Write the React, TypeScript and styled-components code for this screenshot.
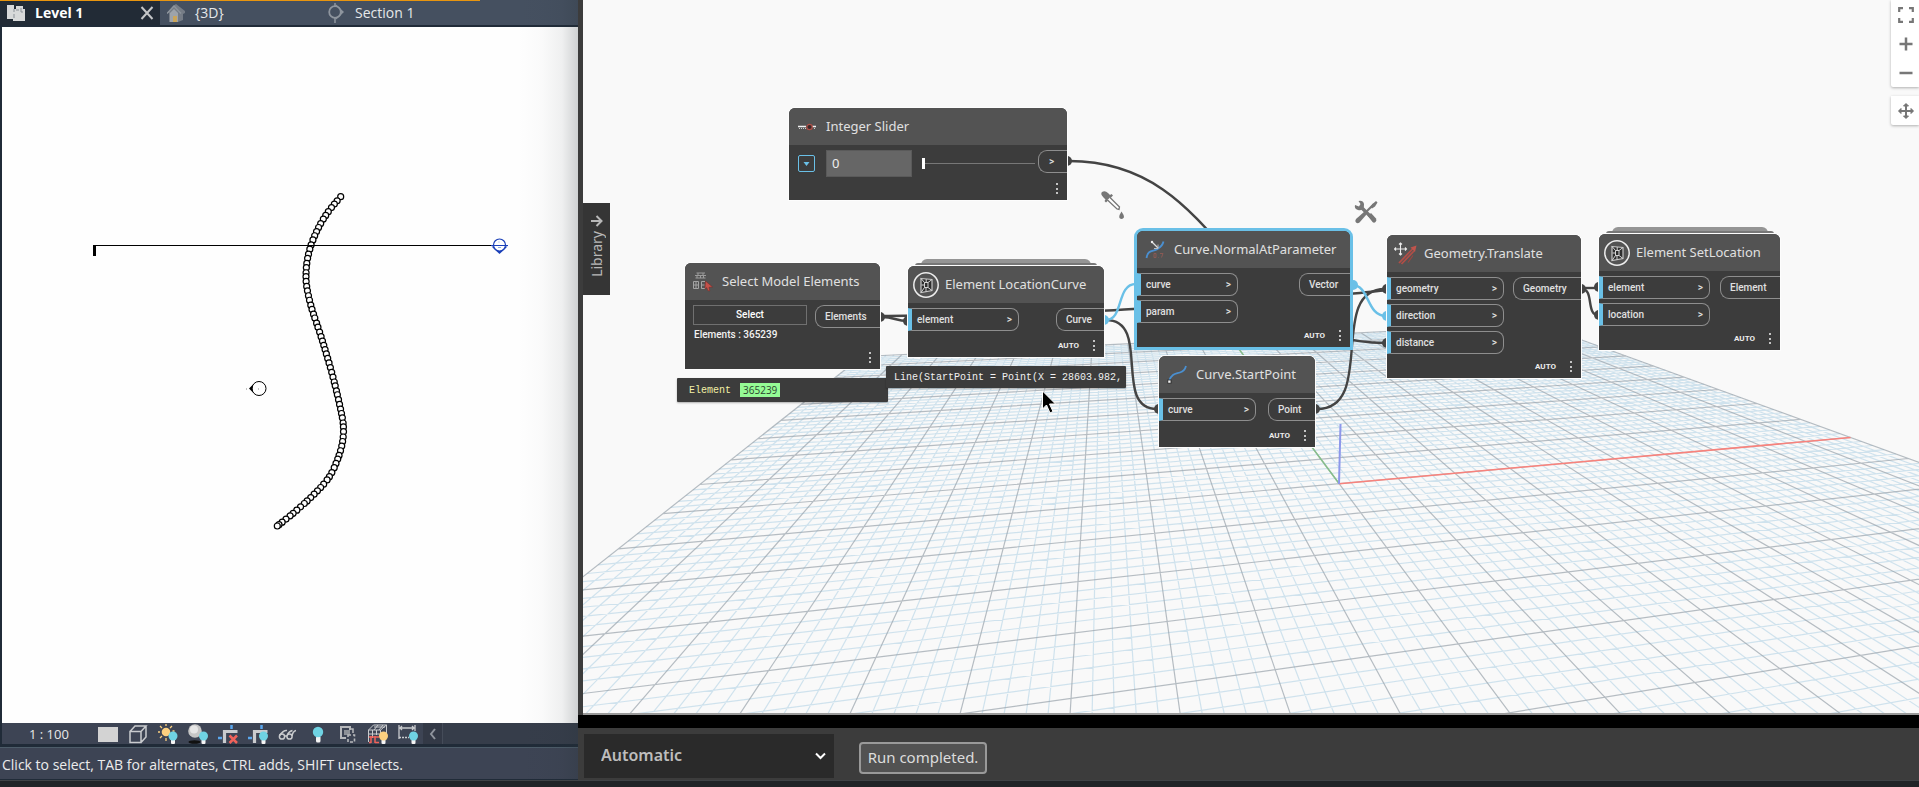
import React from 'react';
import styled, { createGlobalStyle } from 'styled-components';

const colors = {
  node: '#3c3c3c',
  header: '#535353',
  text: '#e0e0e0',
  outline: '#8e8e8e',
  accent: '#6ac0e7',
  wire: '#444444',
  cyan: '#6fd3e3',
  amber: '#fcd07f',
  icon: '#c9cbce',
  red: '#f0625a',
};

const GlobalStyle = createGlobalStyle`
  *, *::before, *::after { box-sizing: border-box; }
  body { margin: 0; font-family: "Open Sans", "Noto Sans", sans-serif; background: #202427; }
  button, input, select { font: inherit; color: inherit; margin: 0; }
  svg { display: block; flex: none; }
`;

/* ---------- window shell ---------- */

const Shell = styled.div`
  display: flex;
  flex-direction: column;
  height: 100vh;
  overflow: hidden;
`;

const Windows = styled.div`
  display: flex;
  flex: 1;
  min-height: 0;
`;

const Taskbar = styled.footer`
  height: 7px;
  background: #202427;
  border-top: 1px solid #3f4346;
`;

/* ---------- drawing window on the left ---------- */

const DrawingWindow = styled.section`
  position: relative;
  display: flex;
  flex-direction: column;
  flex: 578 1 0;
  min-width: 0;
  background: #202b38;

  &::after {
    content: '';
    position: absolute;
    inset: 0 0 0 auto;
    width: 60px;
    pointer-events: none;
    background: linear-gradient(90deg, rgba(40, 50, 55, 0) 0, rgba(40, 50, 55, 0.02) 24px, rgba(40, 50, 55, 0.07) 44px, rgba(40, 50, 55, 0.22) 60px);
  }
`;

const TabBar = styled.nav`
  position: relative;
  display: flex;
  height: 27px;
  background: #455060;
  border-bottom: 2px solid #202b38;

  &::before {
    content: '';
    position: absolute;
    left: 0;
    top: 0;
    width: 83%;
    height: 1px;
    background: #e8950f;
  }
`;

const Tab = styled.div<{ $active?: boolean }>`
  display: flex;
  align-items: center;
  width: 160px;
  padding: 0 6px 0 7px;
  background: ${p => (p.$active ? '#222b36' : 'transparent')};
`;

const TabLink = styled.button<{ $active?: boolean }>`
  display: flex;
  flex: 1;
  align-items: center;
  gap: 10px;
  padding: 0;
  border: 0;
  background: none;
  color: ${p => (p.$active ? '#ffffff' : '#e6e8ea')};
  font-size: 14px;
  line-height: 24px;
  font-weight: ${p => (p.$active ? 700 : 400)};
`;

const IconButton = styled.button`
  display: grid;
  place-items: center;
  padding: 0;
  border: 0;
  background: none;
`;

const Drawing = styled.div`
  flex: 1;
  min-height: 0;
  margin-left: 2px;
  background: #fefefe;
  overflow: hidden;
`;

const ViewBar = styled.div`
  display: flex;
  align-items: center;
  height: 21px;
  margin-left: 2px;
  background: #363d4a;
`;

const ViewTools = styled.div`
  display: flex;
  align-items: center;
  gap: 10px;
  height: 21px;
  padding: 0 5px 0 27px;
  background: #3d4454;
`;

const ScaleButton = styled.button`
  width: 59px;
  padding: 0;
  border: 0;
  background: none;
  color: #e8e8e8;
  font-size: 13px;
  line-height: 20px;
  text-align: left;
`;

const ToolButton = styled(IconButton)`
  width: 20px;
  height: 20px;
`;

const CollapseButton = styled(IconButton)`
  width: 20px;
  height: 21px;
  background: #333946;
  border-right: 1px solid #454c59;
`;

const StatusLine = styled.p`
  margin: 3px 0 1px;
  padding: 3px 0 0 2px;
  border-top: 1px solid #4d5c69;
  background: #3d4454;
  color: #ececec;
  font-size: 14px;
  line-height: 28px;
  white-space: nowrap;
`;

/* ---------- graph window on the right ---------- */

const GraphWindow = styled.section`
  display: flex;
  flex-direction: column;
  flex: 1341 1 0;
  min-width: 0;
  background: #3c3c3c;
`;

const Canvas = styled.div`
  position: relative;
  flex: 1;
  min-height: 0;
  margin-left: 5px;
  background: #f9f9f9;
  border-bottom: 2px solid #999999;
  overflow: hidden;
`;

const Backdrop = styled.svg`
  position: absolute;
  inset: 0;
  width: 100%;
  height: 100%;
`;

const LibraryTab = styled.button`
  position: absolute;
  left: 0;
  top: 203px;
  display: flex;
  flex-direction: column;
  align-items: center;
  gap: 4px;
  width: 27px;
  height: 92px;
  padding: 12px 0 0;
  border: 0;
  background: #353535;
  color: #b8b8b8;
  font: 400 14px "Noto Sans", sans-serif;
`;

const SideLabel = styled.span`
  writing-mode: vertical-rl;
  transform: rotate(180deg);
  line-height: 20px;
`;

const Controls = styled.div`
  position: absolute;
  right: 0;
  top: 0;
  display: flex;
  flex-direction: column;
  gap: 9px;
`;

const ControlGroup = styled.div`
  display: flex;
  flex-direction: column;
  width: 28px;
  padding: 0 0 0 1px;
  background: #ffffff;
  border-radius: 0 0 0 2px;
  box-shadow: 0 1px 3px rgba(0, 0, 0, 0.3);
`;

const ControlButton = styled(IconButton)`
  height: 29px;
  color: #777777;
`;

const Divider = styled.div`
  height: 13px;
  background: #000000;
`;

const RunBar = styled.div`
  display: flex;
  align-items: center;
  gap: 25px;
  height: 52px;
  padding: 4px 0 0 6px;
  font-family: "Noto Sans", sans-serif;
`;

const RunModeWrap = styled.label`
  position: relative;
  display: flex;
  align-items: center;
  svg { position: absolute; right: 8px; pointer-events: none; }
`;

const RunMode = styled.select`
  appearance: none;
  width: 250px;
  height: 44px;
  padding: 0 30px 3px 17px;
  border: 0;
  border-radius: 0;
  background: #2a2a2a;
  color: #bdbdbd;
  font-size: 16px;
  font-weight: 600;
`;

const RunState = styled.output`
  width: 128px;
  margin-top: 4px;
  padding-bottom: 2px;
  border: 2px solid #999999;
  border-radius: 4px;
  background: #525252;
  color: #dcdcdc;
  font-size: 15px;
  line-height: 26px;
  text-align: center;
`;

/* ---------- nodes ---------- */

const Node = styled.article<{ $x: number; $y: number; $w: number; $selected?: boolean }>`
  position: absolute;
  left: ${p => p.$x}px;
  top: ${p => p.$y}px;
  width: ${p => p.$w}px;
  border-radius: 6px 6px 0 0;
  background: ${colors.node};
  color: ${colors.text};
  font: 500 10px/20px Roboto, sans-serif;
  box-shadow: 0 0 0 ${p => (p.$selected ? `3px ${colors.accent}` : '1px #fdfdfd')};
`;

const NodeHeader = styled.header`
  display: grid;
  grid-template-columns: 26px 1fr;
  align-items: center;
  gap: 6px;
  height: 37px;
  padding-left: 5px;
  border-radius: 6px 6px 0 0;
  background: ${colors.header};
  svg { justify-self: center; }
`;

const NodeTitle = styled.h2`
  margin: 0;
  padding-bottom: 2px;
  font: 400 13px/20px "Noto Sans", sans-serif;
  white-space: nowrap;
`;

const Ports = styled.div`
  display: flex;
  justify-content: space-between;
  align-items: flex-start;
  min-height: 30px;
  padding-top: 5px;
`;

const PortColumn = styled.div`
  display: flex;
  flex-direction: column;
  gap: 4px;
`;

const InPort = styled.button<{ $w: number }>`
  display: flex;
  justify-content: space-between;
  width: ${p => p.$w}px;
  padding: 0 6px 0 5px;
  border: 1px solid ${colors.outline};
  border-left: 4px solid ${colors.accent};
  border-radius: 0 8px 8px 0;
  background: ${colors.node};
  line-height: 21px;
`;

const OutPort = styled.button<{ $w: number }>`
  width: ${p => p.$w}px;
  padding: 0 0 0 9px;
  border: 1px solid ${colors.outline};
  border-right: 0;
  border-radius: 9px 0 0 9px;
  background: ${colors.node};
  line-height: 21px;
  text-align: left;
`;

const NodeFooter = styled.footer`
  display: flex;
  justify-content: flex-end;
  align-items: center;
  gap: 14px;
  height: 24px;
  padding: 2px 8px 0 0;
  font-size: 8px;
  font-weight: 700;
  color: #ececec;
`;

const CompactFooter = styled(NodeFooter)`
  height: 18px;
  padding: 0 8px 4px 0;
`;

const SelectButton = styled.button`
  width: 114px;
  padding: 0 0 1px;
  border: 1px solid #707070;
  background: transparent;
  color: #ffffff;
  line-height: 17px;
`;

const SelectBlock = styled.div`
  padding-left: 8px;
`;

const SelectedIds = styled.p`
  margin: 0;
  padding-left: 1px;
  color: #f2f2f2;
`;

const SliderRow = styled.div`
  display: flex;
  align-items: center;
  height: 37px;
  padding: 0 0 0 9px;
`;

const ExpandButton = styled(IconButton)`
  width: 17px;
  height: 17px;
  margin-right: 11px;
  border: 1px solid ${colors.accent};
  border-radius: 2px;
`;

const ValueInput = styled.input`
  width: 86px;
  height: 27px;
  margin-right: 10px;
  padding: 0 5px 1px;
  border: 1px solid #5a5a5a;
  background: #666666;
  color: #eeeeee;
  font: 400 13px "Noto Sans", sans-serif;
`;

const Range = styled.input`
  appearance: none;
  flex: 1;
  min-width: 0;
  height: 11px;
  margin-right: 3px;
  background: linear-gradient(#777777, #777777) center / 100% 1px no-repeat;

  &::-webkit-slider-thumb {
    appearance: none;
    width: 3px;
    height: 11px;
    background: #ffffff;
  }
`;

const SliderOut = styled(OutPort)`
  height: 23px;
  padding-left: 10px;
  align-self: flex-start;
  margin-top: 5px;
`;

const StackLip = styled.div<{ $x: number; $y: number; $w: number }>`
  position: absolute;
  left: ${p => p.$x}px;
  top: ${p => p.$y}px;
  width: ${p => p.$w}px;
  height: 7px;
  padding: 4px 0 0;
  border-radius: 6px 6px 0 0;
  background: #959595;

  &::after {
    content: '';
    display: block;
    height: 3px;
    margin: 0 -6px;
    border-radius: 4px 4px 0 0;
    background: #777777;
  }
`;

/* ---------- value previews ---------- */

const Preview = styled.div<{ $x: number; $y: number; $w: number; $h: number }>`
  position: absolute;
  left: ${p => p.$x}px;
  top: ${p => p.$y}px;
  display: flex;
  align-items: center;
  gap: 9px;
  width: ${p => p.$w}px;
  height: ${p => p.$h}px;
  padding: 0 8px;
  border-radius: 1px;
  background: ${colors.node};
  box-shadow: 0 1px 2px rgba(0, 0, 0, 0.3);
  color: #f0f0f0;
  font: 400 10px "Liberation Mono", monospace;
  white-space: nowrap;
`;

const PreviewType = styled.span`
  padding-left: 4px;
  color: #f2f0a6;
`;

const IdChip = styled.a`
  padding: 0 3px;
  background: #95fb95;
  color: #2c4430;
  font: 400 10px/14px "Open Sans", sans-serif;
  text-decoration: none;
`;

const Floating = styled.svg<{ $x: number; $y: number }>`
  position: absolute;
  left: ${p => p.$x}px;
  top: ${p => p.$y}px;
`;

/* ---------- perspective ground grid ---------- */

const ORIGIN = [1339.2 - 583, 483.7];
const VANISH_X = [4858 - 583, 166];
const VANISH_Y = [1102.8 - 583, 166];
const A = 0.017;
const B = 0.0838;

function project(k: number, m: number): [number, number] {
  const w = 1 + A * k + B * m;
  return [
    (ORIGIN[0] + A * k * VANISH_X[0] + B * m * VANISH_Y[0]) / w,
    (ORIGIN[1] + A * k * VANISH_X[1] + B * m * VANISH_Y[1]) / w,
  ];
}

function segment(a: [number, number], b: [number, number]) {
  return `M${a[0].toFixed(1)} ${a[1].toFixed(1)}L${b[0].toFixed(1)} ${b[1].toFixed(1)}`;
}

function gridPaths() {
  const near = 0.2;
  let minor = '';
  let major = '';
  for (let i = -50; i <= 50; i++) {
    const v = i / 5;
    const mMin = Math.max(-10, (near - 1 - A * v) / B);
    const kMin = Math.max(-10, (near - 1 - B * v) / A);
    let d = segment(project(v, mMin), project(v, 10));
    if (kMin < 10) d += segment(project(kMin, v), project(10, v));
    if (i % 5 === 0) major += d;
    else minor += d;
  }
  return { minor, major };
}

const grid = gridPaths();
const axisX = segment(project(0, 0), project(10, 0));
const axisY = segment(project(0, 0), project(0, 10));

/* ---------- chain of circles along the curve ---------- */

const SPINE: [number, number][] = [
  [340.7, 196.7], [328.3, 211.7], [319, 226.7], [311.7, 243.3], [307.3, 260], [306, 276.7], [307.3, 290],
  [311.7, 308.3], [320, 333.3], [326.7, 355], [333.3, 378.3], [339.3, 403.3], [343.3, 425], [342.3, 443.3],
  [336.7, 461.7], [328.3, 478.3], [313.3, 495], [295, 511.7], [277.3, 526],
];

function chainLinks(step: number) {
  const dense: [number, number][] = [];
  for (let i = 0; i < SPINE.length - 1; i++) {
    const p0 = SPINE[Math.max(0, i - 1)];
    const p1 = SPINE[i];
    const p2 = SPINE[i + 1];
    const p3 = SPINE[Math.min(SPINE.length - 1, i + 2)];
    for (let s = 0; s < 20; s++) {
      const t = s / 20;
      const f = (j: 0 | 1) =>
        0.5 * (2 * p1[j] + (p2[j] - p0[j]) * t + (2 * p0[j] - 5 * p1[j] + 4 * p2[j] - p3[j]) * t * t +
          (3 * p1[j] - p0[j] - 3 * p2[j] + p3[j]) * t * t * t);
      dense.push([f(0), f(1)]);
    }
  }
  dense.push(SPINE[SPINE.length - 1]);
  const links = [dense[0]];
  let run = 0;
  for (let i = 1; i < dense.length; i++) {
    run += Math.hypot(dense[i][0] - dense[i - 1][0], dense[i][1] - dense[i - 1][1]);
    if (run >= step) {
      links.push(dense[i]);
      run -= step;
    }
  }
  links.push(dense[dense.length - 1]);
  return links;
}

const links = chainLinks(4.7);

/* ---------- icons ---------- */

const Dots = () => (
  <svg width="3" height="12" fill="#c4c4c4" aria-hidden="true">
    <rect y="0" x="0" width="2" height="2" /><rect y="5" width="2" height="2" /><rect y="9" width="2" height="2" />
  </svg>
);

const RevitBadge = () => (
  <svg width="26" height="26" viewBox="0 0 26 26" fill="none">
    <circle cx="13" cy="13" r="12.2" stroke="#ececec" strokeWidth="1.5" />
    <path d="M8 6.500l11 1v11l-11 2z" fill="#2e2e2e" stroke="#c6c6c6" strokeWidth="1.200" />
    <path d="M8 6.500l3.500 4h3.500l4-3M11.500 10.500v5h3.500v-5M8 20.500l3.500-5M15 15.500l4 3M13.200 7v3.500M13 15.500v4M8.500 13h3" stroke="#d4d4d4" strokeWidth="1" />
  </svg>
);

const SliderIcon = () => (
  <svg width="18" height="10" viewBox="0 0 18 10" fill="none">
    <path d="M0 4.500h8M14 4.500h4" stroke="#f0f0f0" strokeWidth="1.500" />
    <path d="M1 6.500h1M3 6.500h1M5 6.500h1M7 6.500h1M16 6.500h1" stroke="#c8c8c8" />
    <circle cx="11.500" cy="5" r="2.700" stroke="#b05048" strokeWidth="1.200" fill="#3a2a2a" />
  </svg>
);

const SelectElementsIcon = () => (
  <svg width="20" height="20" viewBox="0 0 20 20" fill="none">
    <path d="M3.500 1h8.500M2 3.500h11M2.500 6h10M5 1v2M10 1v2M7.500 3v3M4 4v2M10.500 4v2" stroke="#9c9c9c" />
    <path d="M.5 9.500h5v7h-5zM.5 13h5M3 9.500v7M12 9.500H8.500v7H12M8.500 13h3" stroke="#a4a4a4" />
    <path d="M12.500 9l7 6-3.500.300.800 3.700-2-.400-1-3-1.800 1.400z" fill="#c4514a" stroke="#7a2a26" strokeWidth=".5" />
  </svg>
);

const NormalIcon = () => (
  <svg width="20" height="20" viewBox="0 0 20 20" fill="none">
    <path d="M1.500 18C3 9 8.500 12 12.500 9c3-2 5-3 6-7.500" stroke="#4a8fd0" strokeWidth="1.800" />
    <path d="M7 2l6 6" stroke="#dddddd" strokeWidth="1.200" /><circle cx="7" cy="2" r="1.200" fill="#eee" />
    <path d="M13 4.500v4H9" stroke="#bbb" />
    <path d="M9 13.500h2v4H9zM13 17.500h.500M15 13.500h3l-1.500 4" stroke="#8a5a54" />
  </svg>
);

const StartPointIcon = () => (
  <svg width="20" height="20" viewBox="0 0 20 20" fill="none">
    <path d="M2 16C5 8 9 9 13 7.500c3-1 5-2.500 6-6.500" stroke="#4a8fd0" strokeWidth="1.800" />
    <rect x=".8" y="15" width="3.200" height="3.200" fill="#f4f4f4" stroke="#222" strokeWidth=".8" />
  </svg>
);

const TranslateIcon = () => (
  <svg width="23" height="23" viewBox="0 0 23 23" fill="none">
    <path d="M6.500 1v12M.500 7h12M5 2.500L6.500 1 8 2.500M5 11.500L6.500 13 8 11.500M2 5.500L.500 7 2 8.500M11 5.500L12.500 7 11 8.500" stroke="#ececec" strokeWidth="1.100" />
    <path d="M5 21L18.500 7M7.500 22L20 9" stroke="#b04e47" strokeWidth="1.800" />
    <path d="M16.500 5.500L22.500 3.500 21 10z" fill="#c0544c" />
    <path d="M14 20.500l5-7" stroke="#9a4640" strokeWidth="1.200" />
  </svg>
);

const Bulb = ({ x, y, fill }: { x: number; y: number; fill: string }) => (
  <g stroke="none">
    <rect x={x - 2} y={y + 3} width="4" height="5" rx="1" fill="#f4f4f4" />
    <circle cx={x} cy={y} r="4.500" fill={fill} />
  </g>
);

const viewTools: [string, React.ReactNode][] = [
  ['Detail level', <rect x="0" y="3" width="20" height="15" fill="#d3d3d3" />],
  ['Visual style', <path d="M2 7.500h11v11H2zM2 7.500L7 2h11l-5 5.500M18 2v11l-5 5.500" fill="none" stroke="#c9cbce" strokeWidth="1.500" />],
  ['Sun path', <g><circle cx="8" cy="8" r="4.300" fill={colors.amber} /><path d="M8 0v2M8 14v3M0 8h2M2 2l2 2M2 14l2-2M14 2l-2 2M14.500 7h2" stroke={colors.amber} strokeWidth="1.300" /><Bulb x={15} y={12} fill={colors.cyan} /></g>],
  ['Shadows', <g><ellipse cx="6.500" cy="18" rx="6" ry="1.800" fill="#111" /><circle cx="7" cy="7" r="6.800" fill="#c6c6c6" /><circle cx="6" cy="5.500" r="4" fill="#e6e6e6" /><Bulb x={15.500} y={12} fill={colors.cyan} /></g>],
  ['Crop view', <g fill="none"><path d="M13.500 1v4M0 14h4" stroke="#5aa7ee" strokeWidth="2.500" /><path d="M6.500 19V7.500h13" stroke="#c9cbce" strokeWidth="3.200" /><path d="M11.500 11.500l7.500 7.500M19 11.500L11.500 19" stroke={colors.red} strokeWidth="2.500" /></g>],
  ['Show crop region', <g fill="none"><path d="M13.500 1v4M0 14h4" stroke="#5aa7ee" strokeWidth="2.500" /><path d="M6.500 19V7.500h13" stroke="#c9cbce" strokeWidth="3.200" /><Bulb x={15.500} y={12} fill={colors.cyan} /></g>],
  ['Temporary hide', <g fill="none" stroke="#c9cbce" strokeWidth="1.500"><circle cx="4" cy="12.500" r="2.600" /><circle cx="11.500" cy="12.500" r="2.600" /><path d="M1.500 11.500C4 8 6 6 9 6.500M6.500 12h2.500M14 12c.5-3 1.500-5 4-5.500M9.500 10.500c1-2 2.500-3.500 5-4" /></g>],
  ['Reveal hidden', <g><rect x="8" y="12" width="4.500" height="6.500" rx="1.500" fill="#f4f4f4" /><circle cx="10" cy="8" r="5.200" fill={colors.cyan} /></g>],
  ['View properties', <g fill="none" stroke="#b6b8bb"><path d="M8 14H3V3h9v3" strokeWidth="2" /><path d="M6 6h6v5H6z" fill="#8d9197" stroke="none" /><path d="M12 5h3v4" strokeWidth="1.500" /><path d="M10 11h6.500v7H10z" strokeWidth="1.600" strokeDasharray="3 2" /></g>],
  ['Analytical model', <g fill="none" stroke="#c9cbce"><path d="M.5 18V6l5-5h13v9M.5 6h12l6-5M4.500 6v8M8.500 6v5M12.500 6v8M.5 10h13M6 3h11M10 1l-4 5M15 1l-4 5" /><path d="M1 13h10M3 12v7M7 12v7M1 18.500h2M7 18.500h4" stroke={colors.red} strokeWidth="1.500" /><Bulb x={15.500} y={12} fill={colors.amber} /></g>],
  ['Constraints', <g fill="none" stroke="#c9cbce"><path d="M1 1v14M17 1v6M2 4h14M4 2L2 4l2 2M14 2l2 2-2 2" strokeWidth="1.300" /><path d="M1 13.500h10" strokeDasharray="2 1" strokeWidth="1.500" /><Bulb x={15.500} y={12} fill={colors.cyan} /></g>],
];

/* ---------- node parts ---------- */

interface GraphNodeProps {
  x: number; y: number; w: number; title: string; icon: React.ReactNode;
  inputs: string[]; inWidth: number; output: string; outWidth: number;
  selected?: boolean;
}

const GraphNode = (p: GraphNodeProps) => (
  <Node $x={p.x} $y={p.y} $w={p.w} $selected={p.selected}>
    <NodeHeader>{p.icon}<NodeTitle>{p.title}</NodeTitle></NodeHeader>
    <Ports>
      <PortColumn>
        {p.inputs.map(name => <InPort key={name} $w={p.inWidth}><span>{name}</span><span>&gt;</span></InPort>)}
      </PortColumn>
      <OutPort $w={p.outWidth}>{p.output}</OutPort>
    </Ports>
    <NodeFooter>AUTO<Dots /></NodeFooter>
  </Node>
);

const Wires = () => (
  <g transform="translate(-583 0)" fill="none" stroke={colors.wire} strokeWidth="2.400">
    <path d="M1069 161C1227 161 1227 343 1385 343" />
    <path d="M882 317C895 317 895 321 908 321" />
    <path d="M882 316C1000 314 1080 313 1133 309S1345 296 1387 290" />
    <path d="M1106 320C1152 320 1112 409 1157 409" />
    <path d="M1317 409C1377 409 1327 289 1385 289" />
    <path d="M1582 288H1598" />
    <path d="M1582 289C1594 289 1586 315 1598 315" />
    <g stroke={colors.accent}>
      <path d="M1106 320C1124 320 1116 284 1136 284" />
      <path d="M1352 285C1370 285 1366 316 1386 316" />
    </g>
    <g fill={colors.wire} stroke="none">
      {[[1067, 161], [880, 317], [908, 321], [1159, 409], [1315, 409], [1387, 289], [1387, 343], [1581, 289], [1599, 287], [1599, 315]].map(([x, y]) => (
        <circle key={`${x}-${y}`} cx={x} cy={y} r="5" />
      ))}
    </g>
    <g fill={colors.accent} stroke="none">
      <circle cx="1104" cy="320" r="5" />
      <circle cx="1353" cy="285" r="5" />
      <circle cx="1387" cy="316" r="5" />
    </g>
  </g>
);

export default function App() {
  return (
    <Shell>
      <GlobalStyle />
      <Windows>
        <DrawingWindow>
          <TabBar>
            <Tab $active>
              <TabLink $active>
                <svg width="18" height="18" viewBox="0 0 18 18"><path d="M0 1h7v4h2V2h7v3h2v12H6v-2H0z" fill="#d8d9da" /><path d="M7 5v3M7 10v4M9 6h3M14 4v4h2" stroke="#8b9198" fill="none" /></svg>
                Level 1
              </TabLink>
              <IconButton aria-label="Close view">
                <svg width="14" height="14" viewBox="0 0 14 14"><path d="M1.500 1l11 12M12.500 1l-11 12" stroke="#c4c6c8" strokeWidth="2" /></svg>
              </IconButton>
            </Tab>
            <Tab>
              <TabLink>
                <svg width="18" height="18" viewBox="0 0 18 18"><path d="M0 9L6 2l3-2 9 7v2l-2 1v6l-5 2H2V9z" fill="#757c86" /><path d="M3 9l4-4 4 4v9H3z" fill="#9da3aa" /><path d="M0 9.500L7 2l7 7.500" stroke="#8d949c" strokeWidth="1.500" fill="none" /><path d="M6 12h4v6H6z" fill="#caa55a" /></svg>
                {'{3D}'}
              </TabLink>
            </Tab>
            <Tab>
              <TabLink>
                <svg width="18" height="20" viewBox="0 0 18 20"><path d="M9 1.500l8 7.500-8 7.500" fill="#8e959e" /><circle cx="8" cy="9" r="5.800" fill="#455060" stroke="#8e959e" strokeWidth="1.800" /><path d="M8 0v3M8 15v5" stroke="#8e959e" strokeWidth="1.500" /></svg>
                Section 1
              </TabLink>
            </Tab>
          </TabBar>

          <Drawing>
            <svg width="576" height="697" viewBox="2 27 576 697" fill="none" role="img" aria-label="Floor plan">
              <g stroke="#000000" strokeWidth="1.200" fill="#fefefe">
                {links.map(([x, y], i) => <circle key={i} cx={x} cy={y} r="3" />)}
              </g>
              <path d="M93 245.500H494" stroke="#000" />
              <path d="M94.500 245v11" stroke="#000" strokeWidth="3" />
              <circle cx="259" cy="388.500" r="7" stroke="#000" fill="#fff" />
              <path d="M249 388.500l4.500-4.500q-2 4.500 0 9z" fill="#000" />
              <path d="M246 389h1M258 389h1" stroke="#888" />
              <path d="M491.500 246.500h16l-8 7.500z" fill="#1a3fb8" />
              <circle cx="499.500" cy="245" r="6" fill="#fff" stroke="#1a3fb8" strokeWidth="1.200" />
              <path d="M491 245.500h17" stroke="#1a3fb8" />
              <path d="M498 247.500h3M498.500 242h1" stroke="#8fb0e8" />
            </svg>
          </Drawing>

          <ViewBar>
            <ViewTools>
              <ScaleButton>1 : 100</ScaleButton>
              {viewTools.map(([label, art]) => (
                <ToolButton key={label} aria-label={label}>
                  <svg width="20" height="20" viewBox="0 0 20 20">{art}</svg>
                </ToolButton>
              ))}
            </ViewTools>
            <CollapseButton aria-label="Collapse">
              <svg width="8" height="12" viewBox="0 0 8 12"><path d="M6 1L2 6l4 5" stroke="#8f949c" strokeWidth="2" fill="none" /></svg>
            </CollapseButton>
          </ViewBar>
          <StatusLine>Click to select, TAB for alternates, CTRL adds, SHIFT unselects.</StatusLine>
        </DrawingWindow>

        <GraphWindow>
          <Canvas>
            <Backdrop aria-hidden="true">
              <path d={grid.minor} stroke="#bdd8e8" strokeWidth="1.200" fill="none" opacity=".7" />
              <path d={grid.major} stroke="#98a3ab" strokeWidth="1.200" fill="none" opacity=".7" />
              <path d={axisX} stroke="#f8827c" strokeWidth="1.600" />
              <path d={axisY} stroke="#86bd8a" strokeWidth="1.500" />
              <path d="M756 484L757.500 424" stroke="#8d97ea" strokeWidth="2" />
              <Wires />
            </Backdrop>

            <Node $x={206} $y={108} $w={278}>
              <NodeHeader><SliderIcon /><NodeTitle>Integer Slider</NodeTitle></NodeHeader>
              <SliderRow>
                <ExpandButton aria-label="Expand settings">
                  <svg width="7" height="6" viewBox="0 0 7 6"><path d="M.5 1h6l-3 4z" fill={colors.accent} /></svg>
                </ExpandButton>
                <ValueInput aria-label="Value" defaultValue="0" />
                <Range type="range" aria-label="Slider" defaultValue="0" />
                <SliderOut $w={29}>&gt;</SliderOut>
              </SliderRow>
              <CompactFooter><Dots /></CompactFooter>
            </Node>

            <Node $x={102} $y={263} $w={195}>
              <NodeHeader><SelectElementsIcon /><NodeTitle>Select Model Elements</NodeTitle></NodeHeader>
              <Ports>
                <SelectBlock>
                  <SelectButton>Select</SelectButton>
                  <SelectedIds>Elements : 365239</SelectedIds>
                </SelectBlock>
                <OutPort $w={65}>Elements</OutPort>
              </Ports>
              <NodeFooter><Dots /></NodeFooter>
            </Node>

            <StackLip $x={338} $y={259} $w={170} />
            <GraphNode x={325} y={266} w={196} title="Element LocationCurve" icon={<RevitBadge />} inputs={['element']} inWidth={111} output="Curve" outWidth={48} />
            <GraphNode x={554} y={231} w={213} title="Curve.NormalAtParameter" icon={<NormalIcon />} inputs={['curve', 'param']} inWidth={101} output="Vector" outWidth={51} selected />
            <GraphNode x={576} y={356} w={156} title="Curve.StartPoint" icon={<StartPointIcon />} inputs={['curve']} inWidth={97} output="Point" outWidth={47} />
            <GraphNode x={804} y={235} w={194} title="Geometry.Translate" icon={<TranslateIcon />} inputs={['geometry', 'direction', 'distance']} inWidth={117} output="Geometry" outWidth={68} />
            <StackLip $x={1029} $y={227} $w={156} />
            <GraphNode x={1016} y={234} w={181} title="Element SetLocation" icon={<RevitBadge />} inputs={['element', 'location']} inWidth={111} output="Element" outWidth={60} />

            <Preview $x={94} $y={378} $w={211} $h={24}>
              <PreviewType>Element</PreviewType>
              <IdChip href="#365239">365239</IdChip>
            </Preview>
            <Preview $x={303} $y={366} $w={240} $h={22}>Line(StartPoint = Point(X = 28603.982,</Preview>

            <Floating $x={517} $y={190} width="24" height="30" viewBox="0 0 24 30" aria-hidden="true">
              <path d="M2 2q3-2 6 1l2 2 1.500-1 1.500 1.500-7 7L4.500 11l1-1.500-2-2Q0 4 2 2z" fill="#777" />
              <path d="M10 7.500l9.500 9.500-.5 2.500-2-.5L7.500 10" fill="#fff" stroke="#777" strokeWidth="1.300" />
              <path d="M21.500 21.500q3.500 5 2 6.500-2 2-4 0-1-2 2-6.500z" fill="#777" />
            </Floating>
            <Floating $x={771} $y={200} width="24" height="24" viewBox="0 0 24 24" aria-hidden="true">
              <path d="M7 7l12 12" stroke="#777" strokeWidth="3.400" />
              <path d="M14 16l3-3 5 5.500q1 2-.5 3.500t-3 0z" fill="#777" />
              <path d="M1 5l4 1.500L6.500 4 4.500 1Q9 0 10 4q.5 3-1.500 5T4 10Q0 9 1 5z" fill="#777" />
              <path d="M20 4L8 16" stroke="#777" strokeWidth="2.200" />
              <path d="M22 1l1.500 1.500-2.500 4-3 2-1.500-1.500 2-3z" fill="#777" />
              <path d="M10 12l2.500 2.500-7 8q-2 1.500-3.500 0t0-3.500z" fill="#777" />
            </Floating>
            <Floating $x={459} $y={390} width="14" height="25" viewBox="0 0 14 25" aria-hidden="true">
              <path d="M.5 1v18l4-4 3.500 8 3-1.500-3.500-7.500h6z" fill="#000" stroke="#fff" />
            </Floating>

            <LibraryTab>
              <svg width="12" height="12" viewBox="0 0 12 12"><path d="M0 6h10M5.500 1l5 5-5 5" stroke="#b8b8b8" strokeWidth="2" fill="none" /></svg>
              <SideLabel>Library</SideLabel>
            </LibraryTab>

            <Controls>
              <ControlGroup>
                <ControlButton aria-label="Fit to view">
                  <svg width="16" height="16" viewBox="0 0 16 16" fill="none" stroke="currentColor" strokeWidth="2.200"><path d="M1.200 5V1.200H5M11 1.200h3.800V5M14.800 11v3.800H11M5 14.800H1.200V11" /></svg>
                </ControlButton>
                <ControlButton aria-label="Zoom in">
                  <svg width="14" height="14" viewBox="0 0 14 14" stroke="currentColor" strokeWidth="2.500"><path d="M7 .500v13M.500 7h13" /></svg>
                </ControlButton>
                <ControlButton aria-label="Zoom out">
                  <svg width="14" height="14" viewBox="0 0 14 14" stroke="currentColor" strokeWidth="2.500"><path d="M.500 7h13" /></svg>
                </ControlButton>
              </ControlGroup>
              <ControlGroup>
                <ControlButton aria-label="Pan">
                  <svg width="18" height="18" viewBox="0 0 18 18" stroke="currentColor" strokeWidth="2" fill="currentColor"><path d="M9 2v14M2 9h14" /><path d="M6.500 4L9 1.500 11.500 4zM6.500 14L9 16.500l2.500-2.500zM4 6.500L1.500 9 4 11.500zM14 6.500L16.500 9 14 11.500z" strokeWidth="1" /></svg>
                </ControlButton>
              </ControlGroup>
            </Controls>
          </Canvas>
          <Divider />
          <RunBar>
            <RunModeWrap>
              <RunMode aria-label="Run mode" defaultValue="Automatic">
                <option>Automatic</option>
                <option>Manual</option>
              </RunMode>
              <svg width="11" height="8" viewBox="0 0 11 8"><path d="M1 1.500l4.500 4.500L10 1.500" stroke="#fff" strokeWidth="2" fill="none" /></svg>
            </RunModeWrap>
            <RunState>Run completed.</RunState>
          </RunBar>
        </GraphWindow>
      </Windows>
      <Taskbar />
    </Shell>
  );
}
